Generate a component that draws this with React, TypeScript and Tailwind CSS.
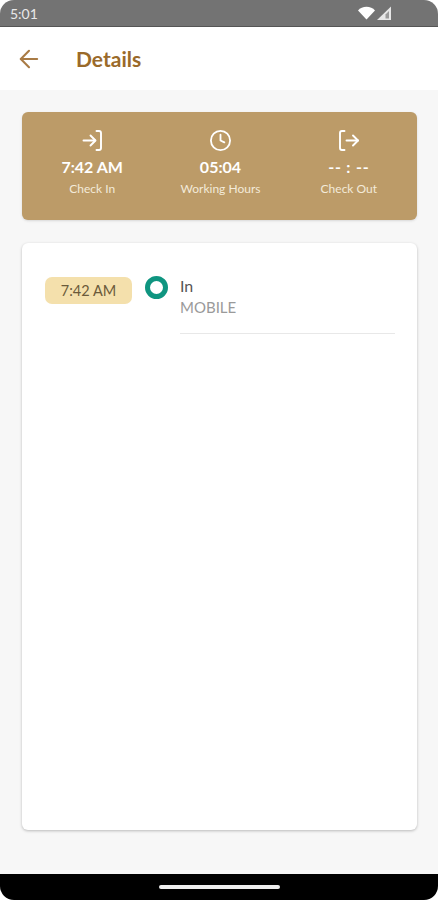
import { ArrowLeft, Clock } from "lucide-react";

function CheckInIcon() {
  return (
    <svg width="23" height="23" viewBox="0 0 23 23" fill="none" stroke="currentColor" strokeWidth="1.9" strokeLinecap="round" strokeLinejoin="round" className="text-white">
      <path d="M15.5 2h2.5a2 2 0 0 1 2 2v15a2 2 0 0 1-2 2h-2.5" />
      <path d="M2.5 11.5h11.5" />
      <path d="M9.5 6.5l5 5-5 5" />
    </svg>
  );
}

function CheckOutIcon() {
  return (
    <svg width="23" height="23" viewBox="0 0 23 23" fill="none" stroke="currentColor" strokeWidth="1.9" strokeLinecap="round" strokeLinejoin="round" className="text-white">
      <path d="M7.5 2H5a2 2 0 0 0-2 2v15a2 2 0 0 0 2 2h2.5" />
      <path d="M9.5 11.5H21" />
      <path d="M16 6.5l5 5-5 5" />
    </svg>
  );
}

function ClockIcon() {
  return <Clock size={23} strokeWidth={1.9} className="text-white" />;
}

const stats = [
  { icon: CheckInIcon, value: "7:42 AM", label: "Check In", valueClass: "" },
  { icon: ClockIcon, value: "05:04", label: "Working Hours", valueClass: "" },
  { icon: CheckOutIcon, value: "-- : --", label: "Check Out", valueClass: "tracking-[0.8px]" },
];

function StatusBar() {
  return (
    <div className="flex h-[27px] shrink-0 items-center justify-between rounded-t-[14px] border-b border-[#555555] bg-[#737373] pl-[10px] pr-[46px]">
      <span className="text-[14px] text-[#e8e8e8]">5:01</span>
      <svg width="34" height="14" viewBox="0 0 34 14">
        <path d="M0 4.5C4-.5 13-.5 17 4.5L8.5 13.5Z" fill="#ffffff" />
        <path d="M33 .5V14H19Z" fill="#e6e6e6" />
        <path d="M31 5V12.5H27.5V8.5Z" fill="#9a9a9a" />
      </svg>
    </div>
  );
}

function Stat({ icon: Icon, value, label, valueClass }: (typeof stats)[number]) {
  return (
    <div className="flex w-[130px] flex-col items-center">
      <Icon />
      <span className={`mt-[3px] text-[16px] leading-[24px] font-bold text-white ${valueClass}`}>{value}</span>
      <span className="mt-[2px] text-[12px] leading-[16px] text-[#f3ead9]">{label}</span>
    </div>
  );
}

export default function App() {
  return (
    <div className="flex h-[900px] flex-col overflow-hidden bg-white font-['Lato','Noto_Sans',sans-serif]">
      <StatusBar />
      <header className="flex h-[63px] shrink-0 items-center bg-white pl-[15px]">
        <ArrowLeft size={28} strokeWidth={1.8} className="text-[#a97b45]" />
        <h1 className="ml-[33px] text-[21px] font-bold text-[#9a6a2a]">Details</h1>
      </header>
      <main className="flex flex-1 flex-col bg-[#f7f7f7] pt-[22px] pr-[21px] pb-[44px] pl-[22px]">
        <section className="flex h-[108px] items-start justify-between rounded-[6px] bg-[#bc9b68] pt-[17px] pr-[4px] pl-[6px] shadow-sm">
          {stats.map((s) => (
            <Stat key={s.label} {...s} />
          ))}
        </section>
        <section className="mt-[23px] flex flex-1 items-start rounded-[6px] bg-white pt-[33px] pr-[22px] pl-[23px] shadow-[0_1px_3px_rgba(0,0,0,0.25)]">
          <span className="mt-[1px] flex h-[27px] w-[87px] shrink-0 items-center justify-center rounded-[7px] bg-[#f4e0ac] text-[14.5px] text-[#6b5a3a]">
            7:42 AM
          </span>
          <span className="ml-[13px] h-[23px] w-[23px] shrink-0 rounded-full border-[5px] border-[#0f9580] bg-white" />
          <div className="-mt-[1px] ml-[12px] flex-1 border-b border-[#e8e8e8] pb-[16px]">
            <p className="text-[16px] leading-[22px] text-[#555555]">In</p>
            <p className="text-[15px] leading-[20px] text-[#9a9a9a]">MOBILE</p>
          </div>
        </section>
      </main>
      <div className="flex h-[26px] shrink-0 items-center justify-center rounded-b-[14px] bg-black">
        <div className="h-[4px] w-[121px] rounded-full bg-[#eeeeee]" />
      </div>
    </div>
  );
}
